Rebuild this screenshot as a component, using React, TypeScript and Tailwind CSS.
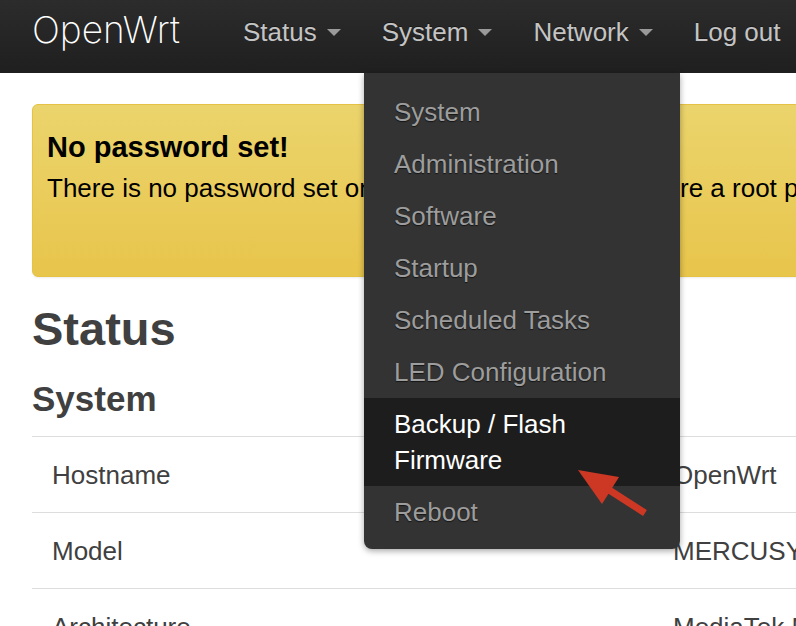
import React from "react";

const navItems = [
  { label: "Status", caret: true },
  { label: "System", caret: true },
  { label: "Network", caret: true },
  { label: "Log out", caret: false },
];

const menuItems = [
  "System",
  "Administration",
  "Software",
  "Startup",
  "Scheduled Tasks",
  "LED Configuration",
];

const rows = [
  ["Hostname", "OpenWrt"],
  ["Model", "MERCUSYS MR70X v1"],
  ["Architecture", "MediaTek MT7621 ver:1 eco:3"],
];

function Caret() {
  return (
    <svg width="14" height="8" viewBox="0 0 14 8" className="ml-[10px] mt-[2px]">
      <polygon points="0,0 14,0 7,7" fill="#9a9a9a" />
    </svg>
  );
}

export default function App() {
  return (
    <div
      className="relative w-[796px] h-[626px] overflow-hidden bg-white"
      style={{ fontFamily: '"Liberation Sans", Arial, sans-serif' }}
    >
      {/* Header */}
      <header className="h-[73px] bg-gradient-to-b from-[#2c2c2c] to-[#1f1f1f] flex items-start px-[32px] whitespace-nowrap">
        <div
          className="w-[191px] shrink-0 pt-[8px] text-[37px] leading-[44px] text-white font-extralight"
          style={{ fontFamily: '"Inter", "Liberation Sans", sans-serif' }}
        >
          OpenWrt
        </div>
        <ul className="flex pt-[14px]">
          {navItems.map((n, i) => (
            <li
              key={n.label}
              className={`flex items-center px-[20px] text-[26px] leading-[36px] text-[#c4c4c4] [text-shadow:0_-1px_0_rgba(0,0,0,0.4)] ${i > 0 ? "ml-[1px]" : ""}`}
            >
              {n.label}
              {n.caret && <Caret />}
            </li>
          ))}
        </ul>
      </header>

      {/* Main content */}
      <main className="px-[32px] w-[1400px]">
        <div className="mt-[31px] h-[173px] rounded-[6px] border border-[#e5c145] bg-gradient-to-b from-[#ebd46c] to-[#e8c54b] pt-[24px] px-[14px] text-black shadow-[0_1px_2px_rgba(0,0,0,0.08)]">
          <h4 className="text-[29px] leading-[36px] font-bold mb-[5px]">No password set!</h4>
          <p className="text-[26px] leading-[36px] whitespace-nowrap">
            There is no password set on this router. Please configure a root password to protect the web interface.
          </p>
        </div>

        <h2 className="mt-[28px] text-[47px] leading-[47px] font-bold text-[#404040]">Status</h2>
        <h3 className="mt-[29px] text-[35px] leading-[35px] font-bold text-[#404040]">System</h3>

        <div className="mt-[20px]">
          {rows.map(([k, v]) => (
            <div key={k} className="flex h-[76px] border-t border-[#dddddd] items-center text-[26px] leading-[36px] text-[#404040] whitespace-nowrap">
              <div className="w-[641px] pl-[20px]">{k}</div>
              <div>{v}</div>
            </div>
          ))}
        </div>
      </main>

      {/* Dropdown menu */}
      <div className="absolute left-[364px] top-[73px] w-[316px] bg-[#333333] rounded-b-[8px] pt-[13px] pb-[11px] shadow-[0_2px_6px_rgba(0,0,0,0.35)]">
        {menuItems.map((m) => (
          <div
            key={m}
            className="px-[30px] py-[8px] text-[26px] leading-[36px] text-[#9d9d9d] [text-shadow:0_1px_1px_rgba(0,0,0,0.6)] whitespace-nowrap"
          >
            {m}
          </div>
        ))}
        <div className="px-[30px] py-[8px] text-[26px] leading-[36px] text-white bg-[#1d1d1d]">
          Backup / Flash
          <br />
          Firmware
        </div>
        <div className="px-[30px] py-[8px] text-[26px] leading-[36px] text-[#9d9d9d] [text-shadow:0_1px_1px_rgba(0,0,0,0.6)]">
          Reboot
        </div>
      </div>

      {/* Red arrow annotation */}
      <svg className="absolute left-[570px] top-[462px]" width="90" height="60" viewBox="0 0 90 60">
        <polygon points="8,8 49,15 32,42" fill="#cc3824" />
        <line x1="36" y1="26" x2="75" y2="51" stroke="#cc3824" strokeWidth="7" />
      </svg>
    </div>
  );
}
